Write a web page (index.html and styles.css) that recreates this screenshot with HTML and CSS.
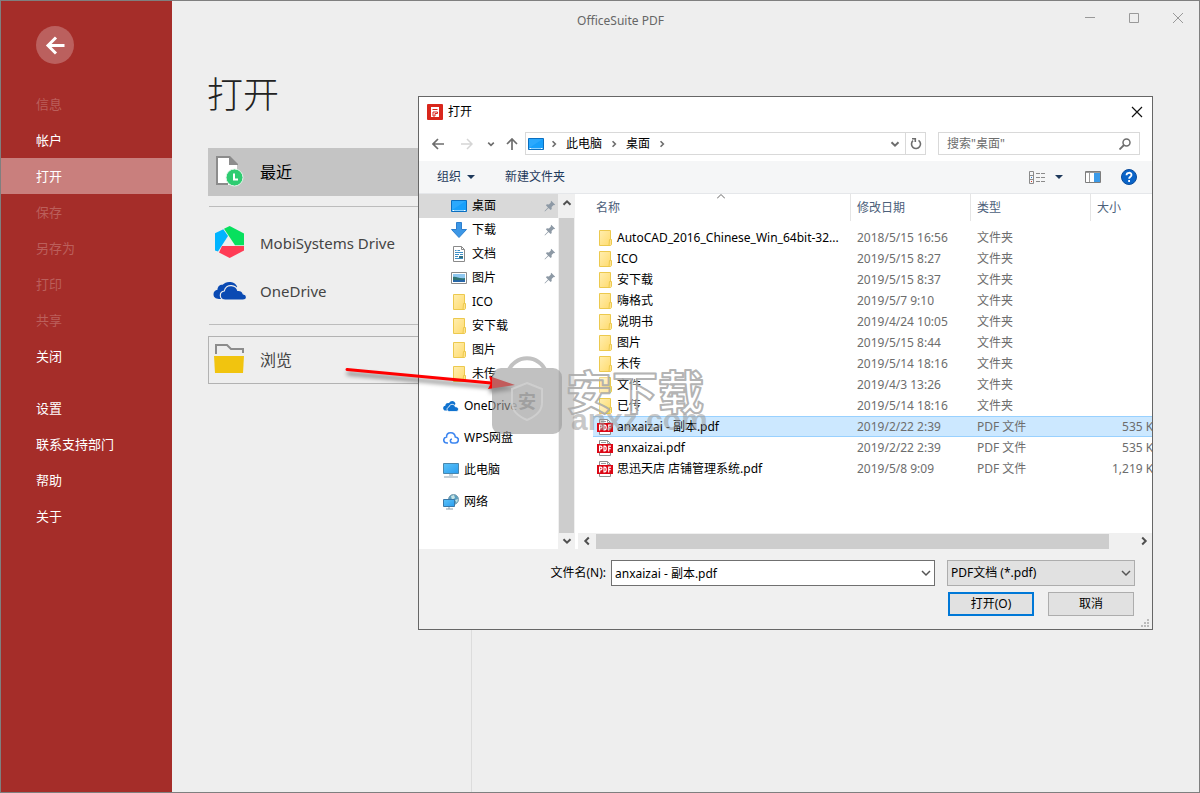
FILE: index.html
```html
<!DOCTYPE html>
<html lang="zh-CN">
<head>
<meta charset="utf-8">
<title>OfficeSuite PDF</title>
<link rel="stylesheet" href="styles.css">
</head>
<body>
<svg class="defs" aria-hidden="true">
  <defs>
    <linearGradient id="gFold" x1="0" y1="0" x2="1" y2="1"><stop offset="0" stop-color="#ffeeb0"/><stop offset="1" stop-color="#ffdb6e"/></linearGradient>
    <linearGradient id="gBlue" x1="0" y1="0" x2="1" y2="1"><stop offset="0" stop-color="#5cc3f8"/><stop offset="1" stop-color="#2a9df0"/></linearGradient>
    <symbol id="folder" viewBox="0 0 16 16"><path d="M2.500.5h11v11.500l-1 1v2.500h-10z" fill="url(#gFold)" stroke="#ecc94e"/><path d="M12.500 9.500h2v5l-.8 1h-1.700z" fill="#ffe391" stroke="#ecc94e"/></symbol>
    <symbol id="desktop" viewBox="0 0 16 16"><path d="M.5 2.500h15v11H.5z" fill="#18a0fb" stroke="#0b6fc0"/><path d="M1 3h14L1 12z" fill="#3db2ff" opacity=".5"/><path d="M1 12.500h14" stroke="#8fd3ff"/><path d="M2 12.500h1m10 0h1" stroke="#fff"/></symbol>
    <symbol id="pdf" viewBox="0 0 16 16"><path d="M2.500.5h8l3 3v12h-11z" fill="#fff" stroke="#8f8f8f"/><path d="M10.500.5v3h3M4 2.500h5" fill="none" stroke="#9a9a9a"/><path d="M0 4h16v9H0z" fill="#dc0715"/><g fill="none" stroke="#fff" stroke-width="1.200"><path d="M2.600 11.500V6.100h1.100a1.300 1.400 0 0 1 0 2.800H2.600M7 6.100v4.800h.7c2 0 2-4.800 0-4.800zM11.700 11.500V6.100h2.300M11.700 8.600h2"/></g></symbol>
    <symbol id="pin" viewBox="0 0 12 12"><path d="M7.200.8l4 4-1.200.5-.4-.2-2 2 .1 2-1 1L4.500 8 1.200 11.200 .6 11.400.8 10.700 4 7.500 1.900 5.300l1-1 2 .1 2-2-.2-.5z" fill="#8d99a5"/></symbol>
    <symbol id="chev" viewBox="0 0 10 10"><path d="M1 3l4 4 4-4" fill="none" stroke="currentColor" stroke-width="1.500"/></symbol>
    <symbol id="chevb" viewBox="0 0 10 10"><path d="M1.500 3.200L5 6.700l3.500-3.500" fill="none" stroke="currentColor" stroke-width="2"/></symbol>
    <symbol id="cloud2" viewBox="0 0 34 20"><path d="M9 18H6C2.500 18 .5 16 .5 13.300c0-2.500 1.700-4.300 4-4.600C4.500 5.500 7 3.500 9.600 3.800 11.500 1.600 14.500.5 17.700 1c3 .4 5.500 2.200 6.500 5" fill="currentColor"/><path d="M12.500 19C9.400 19 7.300 17 7.300 14.500c0-2.300 1.700-4.200 4-4.500C12 6.400 15 4.300 18.500 4.600c3 .3 5.400 2.100 6.200 4.700 3-.2 5 1.200 5.500 3.500 2 .2 3.300 1.500 3.300 3.100 0 1.800-1.500 3.100-3.500 3.100z" fill="currentColor" stroke="#eee" stroke-width="1.200"/></symbol>
  </defs>
</svg>

<div class="app">
  <aside class="side">
    <button class="back" type="button" aria-label="返回"><svg width="20" height="20" viewBox="0 0 20 20"><path d="M19.500 10.500H3M11 2.500l-8 8 8 8" fill="none" stroke="#fff" stroke-width="3"/></svg></button>
    <nav class="menu">
      <button type="button" disabled>信息</button>
      <button type="button">帐户</button>
      <button type="button" class="on">打开</button>
      <button type="button" disabled>保存</button>
      <button type="button" disabled>另存为</button>
      <button type="button" disabled>打印</button>
      <button type="button" disabled>共享</button>
      <button type="button">关闭</button>
    </nav>
    <nav class="menu">
      <button type="button">设置</button>
      <button type="button">联系支持部门</button>
      <button type="button">帮助</button>
      <button type="button">关于</button>
    </nav>
  </aside>

  <div class="content">
    <header class="titlebar">
      <span class="apptitle">OfficeSuite PDF</span>
      <div class="winbtns">
        <button type="button" aria-label="最小化"><svg width="12" height="12"><path d="M1 5.500h10" stroke="#999"/></svg></button>
        <button type="button" aria-label="最大化"><svg width="12" height="12"><path d="M1.500 1.500h9v9h-9z" fill="none" stroke="#999"/></svg></button>
        <button type="button" aria-label="关闭"><svg width="12" height="12"><path d="M1 1l10 10M11 1L1 11" stroke="#999"/></svg></button>
      </div>
    </header>
    <h1>打开</h1>
    <main class="places">
      <button type="button" class="place recent"><svg width="34" height="34" viewBox="0 0 34 34"><path d="M4 2h12l8 8v20H4z" fill="#fff"/><path d="M16 2H4v27h11" fill="none" stroke="#8c8c8c" stroke-width="2"/><path d="M16 1h1l8 8v1h-9z" fill="#8c8c8c"/><circle cx="21.500" cy="22.500" r="8.500" fill="#2ecc71" stroke="#e4f5ea"/><path d="M21 18.500v6h4" fill="none" stroke="#fff" stroke-width="2"/></svg><span>最近</span></button>
      <hr class="rule1">
      <button type="button" class="place"><svg width="34" height="34" viewBox="0 0 34 34"><path d="M11 2.700L16.700 0 31 7.500v11.800h-9z" fill="#07e05e"/><path d="M2 7.300l8.300-4L15 10 5 25.500l-3-1z" fill="#00b4ff"/><path d="M9 20h22v4.500L16.700 32 6 26.500z" fill="#ff3b55"/></svg><span>MobiSystems Drive</span></button>
      <button type="button" class="place"><svg class="od" width="34" height="20"><use href="#cloud2"/></svg><span>OneDrive</span></button>
      <hr class="rule2">
      <button type="button" class="place browse"><svg width="34" height="34" viewBox="0 0 34 34"><path d="M3 11V2h11l4 4h12v4" fill="none" stroke="#8c8c8c" stroke-width="2"/><path d="M1 13h30l-1 17H2z" fill="#f1c40f"/></svg><span>浏览</span></button>
    </main>
  </div>

  <section class="dialog" role="dialog" aria-label="打开">
    <header class="dtitle">
      <svg width="16" height="16" viewBox="0 0 16 16"><rect width="16" height="16" rx="1" fill="#d9271c"/><path d="M4 3h8v10H4z" fill="#fff"/><path d="M5.500 5.500h5M6 8h4.500v1.500H8V12H6z" stroke="#d9271c" fill="none"/></svg>
      <span>打开</span>
      <button type="button" class="dclose" aria-label="关闭"><svg width="12" height="12"><path d="M1 1l10 10M11 1L1 11" stroke="#111" stroke-width="1.200"/></svg></button>
    </header>

    <div class="addr">
      <div class="hist">
        <button type="button" aria-label="后退"><svg width="12" height="12" viewBox="0 0 12 12"><path d="M12 6H1M6 1L1 6l5 5" fill="none" stroke="#6d6d6d" stroke-width="1.700"/></svg></button>
        <button type="button" aria-label="前进"><svg width="12" height="12" viewBox="0 0 12 12"><path d="M0 6h11M6 1l5 5-5 5" fill="none" stroke="#d5d5d5" stroke-width="1.500"/></svg></button>
        <button type="button" aria-label="历史"><svg width="8" height="8"><use href="#chevb"/></svg></button>
        <button type="button" aria-label="上移"><svg width="12" height="12" viewBox="0 0 12 12"><path d="M6 12V1M1 6l5-5 5 5" fill="none" stroke="#6d6d6d" stroke-width="1.700"/></svg></button>
      </div>
      <div class="path">
        <svg width="16" height="16"><use href="#desktop"/></svg>
        <svg class="sep" width="8" height="8"><use href="#chevb"/></svg>
        <button type="button">此电脑</button>
        <svg class="sep" width="8" height="8"><use href="#chevb"/></svg>
        <button type="button">桌面</button>
        <svg class="sep" width="8" height="8"><use href="#chevb"/></svg>
        <button type="button" class="drop" aria-label="以前的位置"><svg width="10" height="10"><use href="#chevb"/></svg></button>
        <button type="button" class="refresh" aria-label="刷新"><svg width="12" height="12" viewBox="0 0 12 12"><path d="M3 2.700A4.500 4.500 0 1 0 8.500 2.300M2 .8h3.300v3.300" fill="none" stroke="#6d6d6d" stroke-width="1.600"/></svg></button>
      </div>
      <label class="search"><input type="text" placeholder="搜索&quot;桌面&quot;" aria-label="搜索"><svg width="12" height="12" viewBox="0 0 12 12"><circle cx="7.500" cy="4.500" r="3.500" fill="none" stroke="#6d6d6d" stroke-width="1.500"/><path d="M5 7L.5 11.500" stroke="#6d6d6d" stroke-width="1.800"/></svg></label>
    </div>

    <div class="tools">
      <button type="button">组织 <svg width="8" height="4"><path d="M0 0h8L4 4z" fill="#1e395b"/></svg></button>
      <button type="button">新建文件夹</button>
      <div class="right">
        <button type="button" aria-label="视图"><svg width="17" height="13" viewBox="0 0 17 13"><path d="M.5.500h4v12h-4zM.5 4.500h4M.5 8.500h4" fill="none" stroke="#8b8b8b"/><path d="M7 2.500h4m1 0h4M7 6.500h4m1 0h4M7 10.500h4m1 0h4" stroke="#8b8b8b"/><path d="M2 6.500h1" stroke="#2a7fd4"/><path d="M2 10.500h1" stroke="#d43a2a"/></svg></button>
        <button type="button" aria-label="更多视图"><svg width="8" height="4"><path d="M0 0h8L4 4z" fill="#1e395b"/></svg></button>
        <button type="button" aria-label="预览窗格"><svg width="16" height="12"><path d="M.5.500h15v11H.5z" fill="#fff" stroke="#7d7d7d"/><path d="M1 1.500h14M4.500 2v9" stroke="#9a9a9a"/><path d="M9 2h6v9H9z" fill="#3c9be8"/></svg></button>
        <button type="button" aria-label="帮助"><svg width="16" height="16"><circle cx="8" cy="8" r="7.500" fill="#0a64c8" stroke="#0a4c9c"/><path d="M5.500 6.200C5.500 3 10.500 3 10.500 6c0 1.700-2.400 1.800-2.400 3.800M8.100 11v2" fill="none" stroke="#fff" stroke-width="1.800"/></svg></button>
      </div>
    </div>

    <div class="panes">
      <nav class="tree">
        <ul>
          <li class="sel"><svg width="16" height="16"><use href="#desktop"/></svg><span>桌面</span><svg class="pin" width="12" height="12"><use href="#pin"/></svg></li>
          <li><svg width="16" height="16" viewBox="0 0 16 16"><path d="M5.500.5h5v7h5L8 15.500.5 7.500h5z" fill="#3c97e6" stroke="#2d7fce"/></svg><span>下载</span><svg class="pin" width="12" height="12"><use href="#pin"/></svg></li>
          <li><svg width="16" height="16" viewBox="0 0 16 16"><path d="M2.500.5h8l3 3v12h-11z" fill="#fff" stroke="#8a8a8a"/><path d="M10.500.5v3h3" fill="none" stroke="#8a8a8a"/><path d="M4 4.500h1.500m1 0H9M4 6.500h8M4 8.500h4m1 0h3M4 10.500h3M4 12.500h8" stroke="#3d8fc6"/><path d="M8 10h4v2H8z" fill="#326f80"/></svg><span>文档</span><svg class="pin" width="12" height="12"><use href="#pin"/></svg></li>
          <li><svg width="16" height="16" viewBox="0 0 16 16"><path d="M.5 2.500h15v11H.5z" fill="#fff" stroke="#8a8a8a"/><path d="M2 4h12v8H2z" fill="#8fc8f0"/><path d="M2 7c3-1 6 2 12 1v4H2z" fill="#2f7472"/><path d="M2 10c4 1 8-1 12 0v2H2z" fill="#2766a8"/></svg><span>图片</span><svg class="pin" width="12" height="12"><use href="#pin"/></svg></li>
          <li><svg width="16" height="16"><use href="#folder"/></svg><span>ICO</span></li>
          <li><svg width="16" height="16"><use href="#folder"/></svg><span>安下载</span></li>
          <li><svg width="16" height="16"><use href="#folder"/></svg><span>图片</span></li>
          <li><svg width="16" height="16"><use href="#folder"/></svg><span>未传</span></li>
        </ul>
        <ul class="roots">
          <li><svg width="16" height="16" viewBox="0 0 16 16"><path d="M5 12.500H2.500C-.6 12.500-.6 8 2.300 7.700 2.500 5 5 4.700 6 5.300 7.500 2 12 2.500 12.500 6" fill="#0f72cf"/><path d="M6.500 13.500c-3 0-3.300-4-.5-4.500.5-3.500 5.500-3.500 6.200-.3 4.300-.2 4.300 4.800 1 4.800z" fill="#0f72cf" stroke="#fff" stroke-width=".8"/></svg><span>OneDrive</span></li>
          <li><svg width="16" height="16" viewBox="0 0 16 16"><path d="M5 13H4C-.3 13-.2 7.500 3.500 7 3.500 1.500 11.500 1 12.300 7 16.800 7.400 16 13 12.300 13H9.500C7 13 6.500 9.500 9 9" fill="none" stroke="#3d86f0" stroke-width="1.600"/></svg><span>WPS网盘</span></li>
          <li><svg width="16" height="16" viewBox="0 0 16 16"><path d="M.5 1.500h15v10H.5z" fill="url(#gBlue)" stroke="#4a87ad"/><path d="M6 12h4v2H6z" fill="#c9d3da"/><path d="M1 15h14" stroke="#8ba0ae"/></svg><span>此电脑</span></li>
          <li><svg width="16" height="16" viewBox="0 0 16 16"><circle cx="10.500" cy="5.500" r="5" fill="#5b9fc0" stroke="#7c9fb0"/><path d="M8 2l3-1 1 3-3 2zM12 6l3-1-1 4z" fill="#c7e4e4"/><path d="M.5 5.500h11v7H.5z" fill="url(#gBlue)" stroke="#3a79a8"/><path d="M3 15h7M6 13v2" stroke="#8ba0ae"/></svg><span>网络</span></li>
        </ul>
      </nav>
      <div class="vbar"><svg class="up" width="10" height="10"><use href="#chevb"/></svg><i></i><svg width="10" height="10"><use href="#chevb"/></svg></div>
      <div class="list">
        <svg class="sortmark" width="8" height="5"><path d="M0 4.500l4-4 4 4" fill="none" stroke="#666"/></svg>
        <div class="scroll">
        <table>
          <colgroup><col class="c1"><col class="c2"><col class="c2"><col class="c3"></colgroup>
          <thead><tr><th>名称</th><th>修改日期</th><th>类型</th><th>大小</th></tr></thead>
          <tbody>
            <tr><td><svg width="16" height="16"><use href="#folder"/></svg>AutoCAD_2016_Chinese_Win_64bit-32...</td><td>2018/5/15 16:56</td><td>文件夹</td><td></td></tr>
            <tr><td><svg width="16" height="16"><use href="#folder"/></svg>ICO</td><td>2019/5/15 8:27</td><td>文件夹</td><td></td></tr>
            <tr><td><svg width="16" height="16"><use href="#folder"/></svg>安下载</td><td>2019/5/15 8:37</td><td>文件夹</td><td></td></tr>
            <tr><td><svg width="16" height="16"><use href="#folder"/></svg>嗨格式</td><td>2019/5/7 9:10</td><td>文件夹</td><td></td></tr>
            <tr><td><svg width="16" height="16"><use href="#folder"/></svg>说明书</td><td>2019/4/24 10:05</td><td>文件夹</td><td></td></tr>
            <tr><td><svg width="16" height="16"><use href="#folder"/></svg>图片</td><td>2019/5/15 8:44</td><td>文件夹</td><td></td></tr>
            <tr><td><svg width="16" height="16"><use href="#folder"/></svg>未传</td><td>2019/5/14 18:16</td><td>文件夹</td><td></td></tr>
            <tr><td><svg width="16" height="16"><use href="#folder"/></svg>文件</td><td>2019/4/3 13:26</td><td>文件夹</td><td></td></tr>
            <tr><td><svg width="16" height="16"><use href="#folder"/></svg>已传</td><td>2019/5/14 18:16</td><td>文件夹</td><td></td></tr>
            <tr class="sel"><td><svg width="16" height="16"><use href="#pdf"/></svg>anxaizai - 副本.pdf</td><td>2019/2/22 2:39</td><td>PDF 文件</td><td>535 KB</td></tr>
            <tr><td><svg width="16" height="16"><use href="#pdf"/></svg>anxaizai.pdf</td><td>2019/2/22 2:39</td><td>PDF 文件</td><td>535 KB</td></tr>
            <tr><td><svg width="16" height="16"><use href="#pdf"/></svg>思迅天店 店铺管理系统.pdf</td><td>2019/5/8 9:09</td><td>PDF 文件</td><td>1,219 KB</td></tr>
          </tbody>
        </table>
        </div>
        <div class="hbar"><svg class="lt" width="10" height="10"><use href="#chevb"/></svg><i></i><svg class="rt" width="10" height="10"><use href="#chevb"/></svg></div>
      </div>
    </div>

    <footer class="foot">
      <div class="row">
        <label for="fname">文件名(N):</label>
        <div class="combo name"><input id="fname" type="text" value="anxaizai - 副本.pdf"><svg width="10" height="10"><use href="#chev"/></svg></div>
        <div class="combo type"><select aria-label="文件类型"><option>PDF文档 (*.pdf)</option></select><svg width="10" height="10"><use href="#chev"/></svg></div>
      </div>
      <div class="row acts">
        <button type="button" class="primary">打开(O)</button>
        <button type="button">取消</button>
      </div>
      <svg class="grip" width="9" height="9"><path d="M6 1h2M3 4h2m1 0h2M0 7h2m1 0h2m1 0h2" stroke="#bbb" stroke-width="2"/></svg>
    </footer>
  </section>

  <svg class="arrow" width="190" height="40" viewBox="0 0 190 40" aria-hidden="true">
    <g class="shaft"><path d="M6 10.500L150 24" stroke="#f00" stroke-width="3" stroke-linecap="round"/><path d="M148 17l26 9-27 4 3-6z" fill="#f00"/></g>
  </svg>
  <svg class="mark" width="222" height="92" viewBox="0 0 222 92" aria-hidden="true">
    <g class="bag"><path d="M17 18a20 20 0 0 1 38 0" fill="none" stroke="#999" stroke-width="4"/><rect x="1" y="14" width="70" height="66" rx="9" fill="#999"/></g>
    <path d="M36 29l15 6v14c0 9-8 14-15 17-7-3-15-8-15-17V35z" fill="#bcbcbc" fill-opacity=".7" stroke="#d2d2d2" stroke-opacity=".8" stroke-width="2"/>
    <text class="seal" x="27" y="54">安</text>
    <text class="en" x="80" y="76">anxz.com</text>
    <text class="cn" x="75" y="55">安下载</text>
  </svg>
</div>
</body>
</html>
```

FILE: styles.css
```css
* { box-sizing: border-box; }
body {
  margin: 0;
  font: 12px/16px "Noto Sans", "Noto Sans CJK SC", sans-serif;
  color: #000;
}
button, input, select { font: inherit; color: inherit; }
button { border: 0; padding: 0; background: none; }
svg { flex: none; display: block; }
ul { list-style: none; margin: 0; padding: 0; }
.defs { position: absolute; width: 0; height: 0; }

.app {
  position: relative;
  display: flex;
  min-height: 100vh;
  border: 1px solid #7f7f7f;
  background: #eee;
  overflow: hidden;
}

/* Sidebar */
.side { width: 171px; flex: none; background: #a52d29; padding-top: 25px; }
.back {
  display: flex; align-items: center; justify-content: center;
  width: 38px; height: 38px; margin: 0 0 22px 35px;
  border-radius: 50%; background: #bb605e;
}
.menu { display: flex; flex-direction: column; margin-bottom: 16px; }
.menu button {
  height: 36px; padding: 0 0 1px 35px; text-align: left;
  font-size: 13px; color: #fff;
}
.menu button:disabled { color: #bb5f5b; }
.menu .on { background: #c97f7d; }

/* Start page */
.content { flex: 1; display: flex; flex-direction: column; }
.titlebar { display: flex; align-items: center; height: 38px; padding: 2px 15px 0; }
.apptitle { flex: 1; margin-right: 130px; text-align: center; color: #666; }
.winbtns { display: flex; gap: 32px; position: absolute; right: 15px; top: 11px; }
h1 {
  margin: 0; padding: 29px 35px 26px; font-size: 36px; line-height: 54px;
  font-weight: 300; color: #222;
}
.places {
  flex: 1; width: 300px; padding: 0 8px 0 36px;
  border-right: 1px solid #dcdcdc;
}
.place {
  display: flex; align-items: center; gap: 13px;
  width: 100%; height: 48px; padding-left: 5px;
  font-size: 15px; color: #444;
}
.place span { padding-bottom: 1px; }
.recent { background: #c4c4c4; color: #000; }
.recent, .browse { font-size: 16px; }
.browse { border: 1px solid #b2b2b2; padding-left: 4px; }
.places hr { border: 0; border-top: 1px solid #bcbcbc; }
.rule1 { margin: 10px 0 12px 1px; }
.rule2 { margin: 9px 0 11px 1px; }
.od { color: #0a4ab3; }

/* Dialog */
.dialog {
  position: absolute; left: 417px; right: 46px; top: 95px;
  display: flex; flex-direction: column;
  border: 1px solid #666; background: #fff;
}
.dtitle { display: flex; align-items: center; gap: 5px; height: 29px; padding: 0 9px 0 8px; }
.dclose { margin-left: auto; }
.addr { display: flex; align-items: center; height: 35px; padding: 0 12px; color: #6d6d6d; }
.hist { display: flex; align-items: center; gap: 15px; width: 94px; padding-left: 1px; }
.hist button:nth-child(2) { margin-left: 2px; }
.hist button:nth-child(3) { margin: 0 -4px 0 -1px; }
.path {
  flex: 1; display: flex; align-items: center; gap: 6px;
  height: 23px; padding-left: 2px; border: 1px solid #d9d9d9;
}
.path button { color: #000; margin: 0 2px; }
.path .sep { transform: rotate(-90deg); }
.path .drop { margin-left: auto; color: #6d6d6d; margin-right: -1px; }
.path .refresh { border-left: 1px solid #d9d9d9; padding: 5px 3px 4px 4px; margin: 0; }
.search {
  display: flex; align-items: center; width: 202px; height: 23px;
  margin-left: 12px; padding: 0 8px; border: 1px solid #d9d9d9;
}
.search input { flex: 1; min-width: 0; border: 0; padding: 0; outline: 0; background: none; }
.search input::placeholder { color: #6d6d6d; opacity: 1; }
.tools {
  display: flex; align-items: center; gap: 30px; height: 33px;
  padding: 0 15px 0 18px; background: #f5f6f7;
  border-bottom: 1px solid #e5e7ea; color: #1e395b;
}
.tools button { display: flex; align-items: center; gap: 6px; }
.right { margin-left: auto; display: flex; align-items: center; gap: 20px; }
.right button:nth-child(2) { margin-left: -11px; margin-right: 2px; }

.panes { display: flex; height: 355px; }
.tree { width: 139px; flex: none; }
.tree li { display: flex; align-items: center; gap: 5px; height: 24px; padding-left: 32px; }
.tree li span { flex: 1; }
.tree .sel { background: #d9d9d9; }
.pin { margin-right: 2px; }
.roots { display: flex; flex-direction: column; gap: 8px; margin-top: 8px; }
.roots li { padding-left: 24px; }
.vbar, .hbar { display: flex; align-items: center; background: #f0f0f0; color: #505050; }
.vbar { flex-direction: column; width: 17px; padding: 4px 1px 3px 1px; gap: 10px; flex: none; }
.vbar i { width: 15px; flex: 1; margin-bottom: -7px; background: #cdcdcd; }
.vbar .up { transform: rotate(180deg); }
.list {
  position: relative; flex: 1; min-width: 0; display: flex; flex-direction: column;
  border-left: 1px solid #fff;
}
.sortmark { position: absolute; left: 141px; top: 0; }
.scroll { flex: 1; overflow: hidden; padding-left: 17px; }
.hbar { height: 16px; padding: 0 3px 0 4px; margin-left: 2px; gap: 4px; }
.hbar i { flex: 1; height: 15px; margin: 0 26px 0 0; background: #cdcdcd; }
.lt { transform: rotate(90deg); }
.rt { transform: rotate(-90deg); }

table { table-layout: fixed; width: 577px; border-collapse: separate; border-spacing: 0; }
.c1 { width: 258px; }
.c2 { width: 120px; }
.c3 { width: 79px; }
th {
  height: 27px; padding: 0 0 0 6px; text-align: left;
  font-weight: 400; color: #4c607a; border-right: 1px solid #e5e5e5;
}
th:first-child { padding-left: 3px; }
tbody::before { content: ""; display: block; height: 6px; }
td {
  height: 21px; padding: 0 0 0 6px; color: #6d6d6d; line-height: 16px;
  white-space: nowrap; border: 1px solid transparent; border-width: 1px 0;
}
td:first-child { padding-left: 4px; color: #000; }
td:first-child svg { float: left; margin-right: 4px; }
td:last-child { padding-right: 9px; text-align: right; }
tr.sel td { background: #cce8ff; border-color: #99d1ff; }

.foot { position: relative; background: #f0f0f0; padding: 11px 17px 13px; }
.row { display: flex; align-items: center; justify-content: flex-end; }
.row label { margin-right: 5px; }
.combo { position: relative; height: 26px; }
.combo input, .combo select {
  appearance: none; width: 100%; height: 100%; padding: 0 20px 0 3px;
  border: 1px solid #707070; border-radius: 0; background: #fff; outline: 0;
}
.combo select { background: #e1e1e1; border-color: #adadad; }
.combo svg { position: absolute; right: 4px; top: 8px; color: #555; }
.name { width: 324px; margin-right: 12px; }
.type { width: 188px; }
.acts { gap: 14px; margin-top: 6px; padding-right: 1px; }
.acts button { width: 86px; height: 24px; background: #e1e1e1; border: 1px solid #adadad; }
.acts .primary { border: 2px solid #0078d7; }
.grip { position: absolute; right: 2px; bottom: 1px; }

/* Annotation and watermark */
.arrow { position: absolute; left: 340px; top: 358px; }
.shaft { filter: drop-shadow(1px 4px 2px rgba(0, 0, 0, .5)); }
.mark { position: absolute; left: 490px; top: 353px; }
.bag { opacity: .6; }
.mark text { font-family: "Noto Sans CJK SC", sans-serif; font-weight: 700; }
.mark .seal { font-size: 18px; fill: #a0a0a0; }
.mark .cn {
  font-size: 46px; fill: #fff; fill-opacity: .35; stroke: #aaa;
  stroke-opacity: .9; stroke-width: 2px; stroke-linejoin: round;
}
.mark .en { font: 700 30px "Liberation Sans", sans-serif; fill: #999; fill-opacity: .55; }
```
